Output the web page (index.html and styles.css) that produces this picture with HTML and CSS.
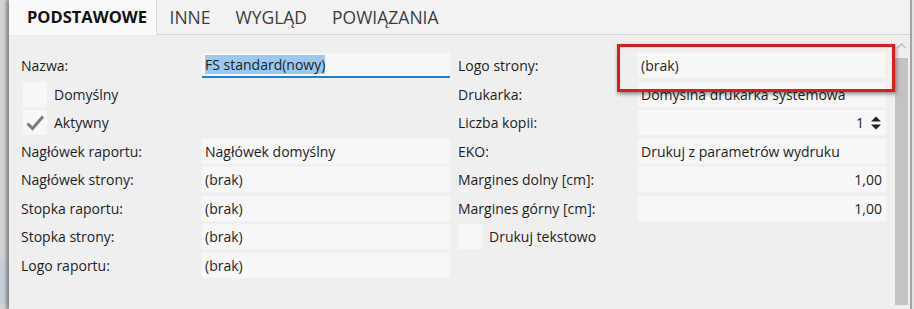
FILE: index.html
```html
<!DOCTYPE html>
<html lang="pl">
<head>
    <meta charset="UTF-8">
    <meta name="viewport" content="width=device-width, initial-scale=1.0">
    <title>Definicja wydruku</title>
    <link rel="stylesheet" href="styles.css">
</head>
<body>

<div class="backdrop"></div>

<div class="dialog">
    <div class="tabs">
        <div class="tab active">PODSTAWOWE</div>
        <div class="tab">INNE</div>
        <div class="tab">WYGLĄD</div>
        <div class="tab">POWIĄZANIA</div>
    </div>
    <div class="body">
        <div class="form">
            <div class="col col-left">
                <div class="label">Nazwa:</div>
                <div class="field field-edit"><span class="selected">FS standard(nowy)</span></div>

                <div class="check-row"><div class="box"></div>Domyślny</div>
                <div class="check-row">
                    <div class="box">
                        <svg width="24" height="25" viewBox="0 0 24 25"><path d="M4.5 13.5 L9.5 18.5 L20 6.5" fill="none" stroke="#7b7b7b" stroke-width="3"/></svg>
                    </div>Aktywny
                </div>

                <div class="label">Nagłówek raportu:</div>
                <div class="field">Nagłówek domyślny</div>
                <div class="label">Nagłówek strony:</div>
                <div class="field">(brak)</div>
                <div class="label">Stopka raportu:</div>
                <div class="field">(brak)</div>
                <div class="label">Stopka strony:</div>
                <div class="field">(brak)</div>
                <div class="label">Logo raportu:</div>
                <div class="field">(brak)</div>
            </div>

            <div class="col col-right">
                <div class="label">Logo strony:</div>
                <div class="field">(brak)</div>
                <div class="label">Drukarka:</div>
                <div class="field">Domyślna drukarka systemowa</div>
                <div class="label">Liczba kopii:</div>
                <div class="field num">1
                    <svg class="spin" width="12" height="16" viewBox="0 0 12 16"><path d="M1 6.5 L6 1.5 L11 6.5 Z M1 9.5 L6 14.5 L11 9.5 Z" fill="#222"/></svg>
                </div>
                <div class="label">EKO:</div>
                <div class="field">Drukuj z parametrów wydruku</div>
                <div class="label">Margines dolny [cm]:</div>
                <div class="field num">1,00</div>
                <div class="label">Margines górny [cm]:</div>
                <div class="field num">1,00</div>
                <div class="check-row"><div class="box"></div>Drukuj tekstowo</div>
            </div>
        </div>
        <div class="scrollbar">
            <svg class="scroll-up" width="13" height="10" viewBox="0 0 13 10"><path d="M2.5 7 L6.5 3 L10.5 7" fill="none" stroke="#bdbdbd" stroke-width="1.3"/></svg>
            <div class="thumb"></div>
        </div>
    </div>
    <!-- ramka zaznaczenia -->
    <div class="mark"></div>
</div>

</body>
</html>
```

FILE: styles.css
```css
body{
    margin:0;
    height:309px;
    overflow:hidden;
    display:flex;
    background-color:#e2e2e2;
    font-family:'Open Sans', 'Noto Sans', sans-serif;
    color:#1e1e1e;
}
.backdrop{
    width:9px;
    flex-shrink:0;
    background:linear-gradient(to bottom, #d3d3d3 0, #d3d3d3 255px, #c9ced8 265px, #c9ced8 300px, #d3d3d3 309px);
}
.dialog{
    position:relative;
    width:901px;
    flex-shrink:0;
    display:flex;
    flex-direction:column;
    background-color:#efefef;
    border-right:2px solid #a3a3a3;
    box-shadow:-3px 0 3px rgba(0,0,0,.35);
}
/* zakladki */
.tabs{
    display:flex;
    height:34px;
    background-color:#f2f2f2;
    border-bottom:1px solid #d6d6d6;
}
.tab{
    padding:0 12.5px;
    line-height:34px;
    font-size:17.5px;
    color:#3c3c3c;
}
.tab.active{
    padding:0 9px 0 18px;
    margin-bottom:-1px;
    height:35px;
    font-size:16.5px;
    font-weight:700;
    color:#111;
    background-color:#fafafa;
    border-right:1px solid #dedede;
}
/* formularz */
.body{
    flex:1;
    display:flex;
}
.form{
    flex:1;
    display:flex;
    gap:8px;
    padding:18px 0 0 12px;
}
.col{
    display:grid;
    grid-template-columns:181px 248px;
    grid-auto-rows:25px;
    row-gap:3.5px;
    align-content:start;
}
.col-right{
    grid-template-columns:180px 248px;
}
.label{
    display:flex;
    align-items:center;
    font-size:14px;
}
.field{
    display:flex;
    align-items:center;
    padding:0 3px;
    font-size:14px;
    background-color:#f7f7f7;
    white-space:nowrap;
    overflow:hidden;
}
.field-edit{
    border-bottom:2px solid #1f80d2;
}
.selected{
    background-color:#99c9ef;
    line-height:19px;
}
.num{
    justify-content:flex-end;
    padding-right:4px;
}
.spin{
    margin-left:6px;
}
.check-row{
    grid-column:1 / -1;
    display:flex;
    align-items:center;
    gap:7px;
    font-size:14px;
}
.col-left .check-row{
    padding-left:2px;
}
.box{
    width:24px;
    height:25px;
    background-color:#f7f7f7;
}
.box svg{
    display:block;
}
.scrollbar{
    width:13px;
    margin-right:2px;
    display:flex;
    flex-direction:column;
    align-items:center;
    padding-top:6px;
}
.scroll-up{
    display:block;
}
.thumb{
    width:13px;
    flex:1;
    margin-top:7px;
    margin-bottom:4px;
    background-color:#c3c3c3;
}
.mark{
    position:absolute;
    left:608px;
    top:44px;
    width:272px;
    height:42px;
    border:3px solid #dd1c1c;
    box-shadow:1px 2px 4px rgba(0,0,0,.45);
}
```
